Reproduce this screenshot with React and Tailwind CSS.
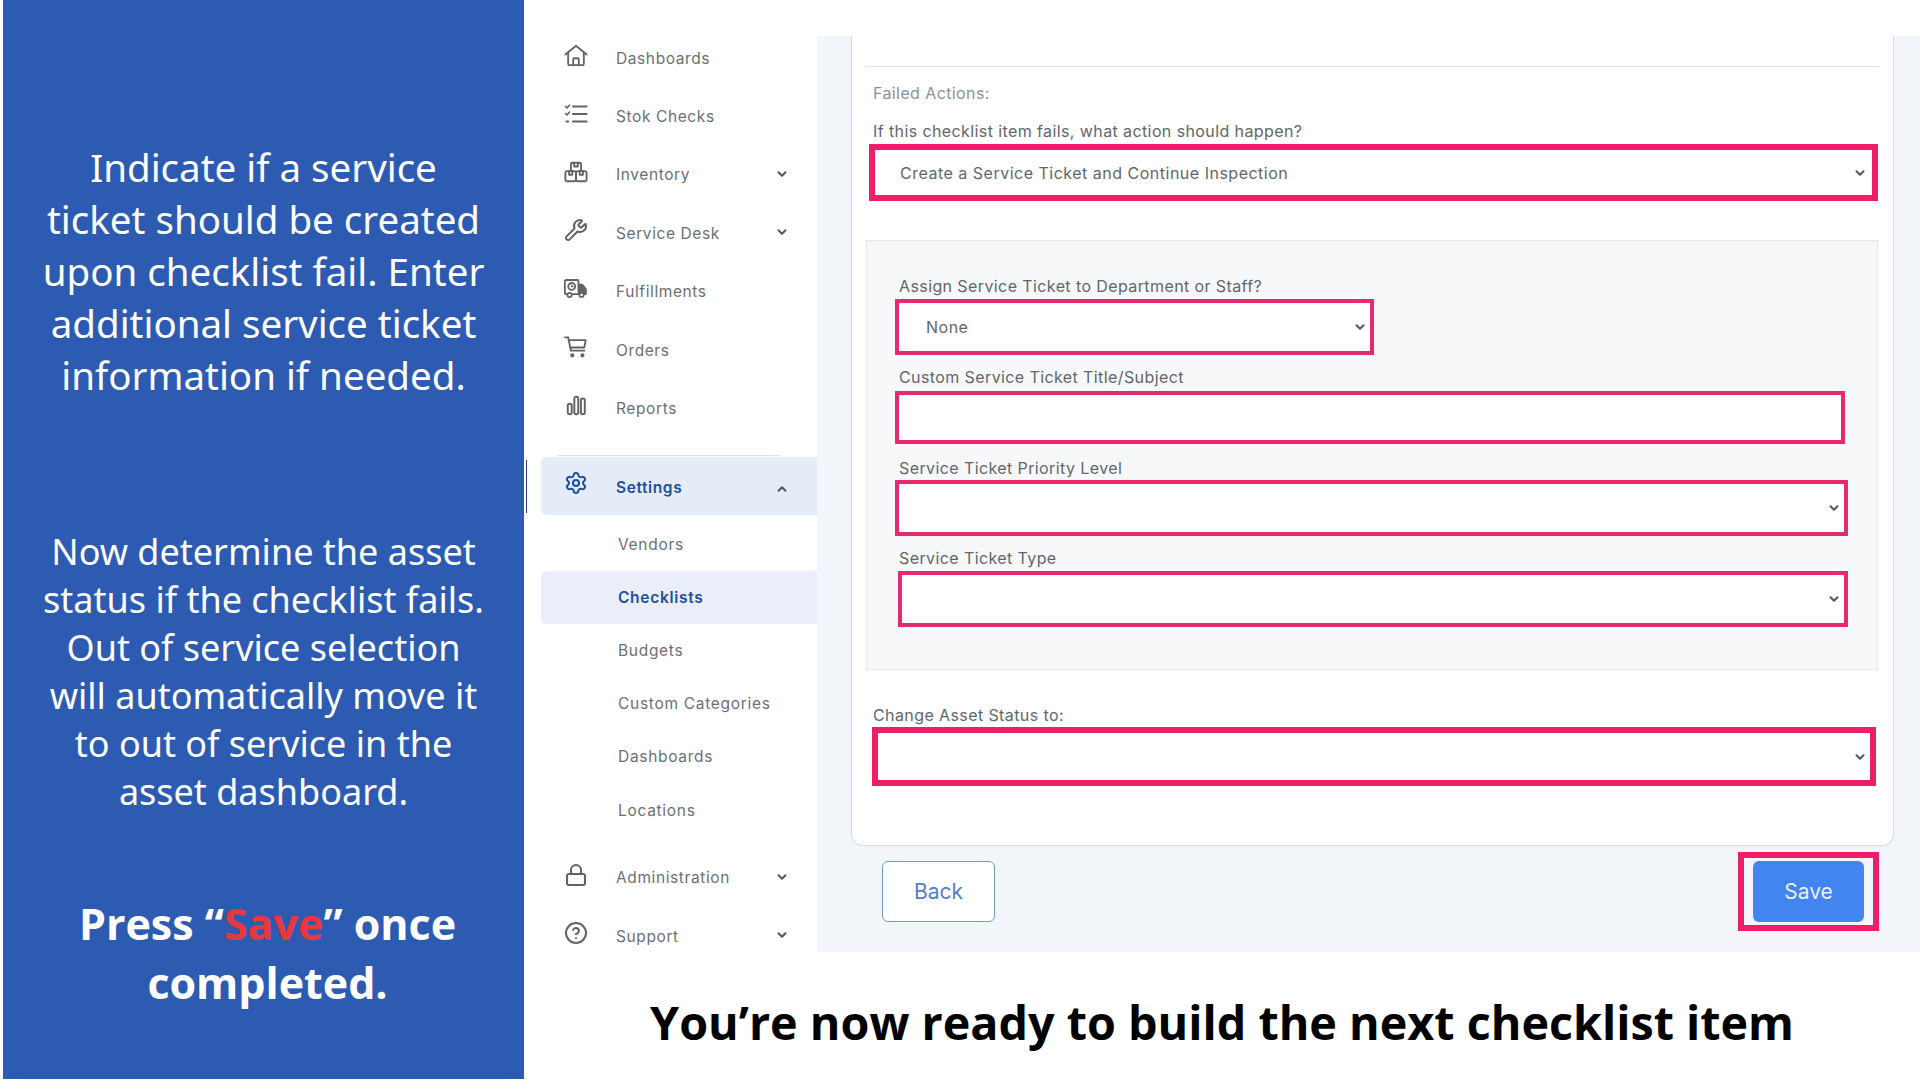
import { ChevronDown, ChevronUp, CircleHelp, Lock, Settings, Wrench } from 'lucide-react';

function HomeIcon() {
  return (
    <svg width="26" height="25" viewBox="0 0 26 25" fill="none" stroke="currentColor" strokeWidth="2" strokeLinecap="round" strokeLinejoin="round">
      <path d="M1.500 11.500L13 2l11.500 9.500" />
      <path d="M4.500 10v11.500a1.500 1.500 0 0 0 1.500 1.500h14a1.500 1.500 0 0 0 1.500-1.500V10" />
      <path d="M10 23v-6.500a1 1 0 0 1 1-1h4a1 1 0 0 1 1 1V23" />
    </svg>
  );
}

function ChecksIcon() {
  return (
    <svg width="24" height="24" viewBox="0 0 24 24" fill="none" stroke="currentColor" strokeLinecap="round" strokeLinejoin="round">
      <path d="M1.500 4.500l1.500 1.500L5.500 3M1.500 11.500l1.500 1.500L5.500 10" strokeWidth="1.600" />
      <path d="M9 4.500h13.500M9 12h13.500M9 19.500h13.500" strokeWidth="2.200" />
      <path d="M2.500 19.500h1.500" strokeWidth="2.200" />
    </svg>
  );
}

function BoxesIcon() {
  return (
    <svg width="26" height="24" viewBox="0 0 26 24" fill="none" stroke="currentColor" strokeWidth="2" strokeLinejoin="round" strokeLinecap="round">
      <path d="M7.500 11V3.500A1.500 1.500 0 0 1 9 2h8a1.500 1.500 0 0 1 1.500 1.500V11" />
      <path d="M11 2v4h4V2" />
      <rect x="1.500" y="11" width="11.500" height="11" rx="2" />
      <rect x="13" y="11" width="11.500" height="11" rx="2" />
      <path d="M5.500 11v4h3.500v-4M17 11v4h3.500v-4" />
    </svg>
  );
}

function TruckIcon() {
  return (
    <svg width="28" height="24" viewBox="0 0 28 24" fill="none" stroke="currentColor" strokeWidth="2.100" strokeLinejoin="round">
      <path d="M4 18H2.500A1.500 1.500 0 0 1 1 16.500V3a1.500 1.500 0 0 1 1.500-1.500h13A1.500 1.500 0 0 1 17 3v15H9" />
      <circle cx="9" cy="9" r="4" />
      <path d="M9 7v2.200h2" strokeWidth="1.500" />
      <path d="M17 7h4.500l4 5v6h-8z" fill="currentColor" />
      <circle cx="6.500" cy="19" r="2.500" fill="#ffffff" />
      <circle cx="20.500" cy="19" r="2.500" fill="#ffffff" />
    </svg>
  );
}

function CartIcon() {
  return (
    <svg width="26" height="24" viewBox="0 0 26 24" fill="none" stroke="currentColor" strokeWidth="2" strokeLinecap="round" strokeLinejoin="round">
      <path d="M1 1.500h3.500l3 14.500h14.500" />
      <path d="M5.200 4.500h18.300l-1.500 8H7" />
      <circle cx="9" cy="21" r="1.300" fill="currentColor" />
      <circle cx="20" cy="21" r="1.300" fill="currentColor" />
    </svg>
  );
}

function BarsIcon() {
  return (
    <svg width="21" height="21" viewBox="0 0 24 24" fill="none" stroke="currentColor" strokeWidth="2.200">
      <rect x="2" y="10" width="4.500" height="12" rx="2" />
      <rect x="9.500" y="2" width="4.500" height="20" rx="2" />
      <rect x="17" y="4" width="4.500" height="18" rx="2" />
    </svg>
  );
}

function NavRow({ icon, label, caret }) {
  return (
    <div className="flex h-[58.4px] items-center pl-[40px] pr-[28px] text-[#6b7075]">
      <span className="-mt-[6px] flex w-[24px] shrink-0 justify-center text-[#5f6469]">{icon}</span>
      <span className="ml-[28px] text-[15.500px] tracking-[0.6px]">{label}</span>
      {caret && <ChevronDown size={14} strokeWidth={3.500} className="ml-auto -mt-[2px] text-[#55595e]" />}
    </div>
  );
}

function SubRow({ label, active }) {
  return (
    <div
      className={`ml-[17px] flex h-[53.200px] items-center rounded-l-md pl-[77px] text-[15.500px] tracking-[0.7px] ${
        active ? 'bg-[#e9eef8] font-semibold text-[#1d4f9f]' : 'text-[#6b7075]'
      }`}
    >
      {label}
    </div>
  );
}

function Sidebar() {
  return (
    <nav className="relative w-[293px] shrink-0 bg-white pt-[29px]">
      <NavRow icon={<HomeIcon />} label="Dashboards" />
      <NavRow icon={<ChecksIcon />} label="Stok Checks" />
      <NavRow icon={<BoxesIcon />} label="Inventory" caret />
      <NavRow icon={<Wrench size={24} strokeWidth={2} />} label="Service Desk" caret />
      <NavRow icon={<TruckIcon />} label="Fulfillments" />
      <NavRow icon={<CartIcon />} label="Orders" />
      <NavRow icon={<BarsIcon />} label="Reports" />
      <div className="ml-[33px] mt-[17px] mr-[37px] h-px bg-[#dde1e8]" />
      <div className="ml-[17px] mt-px flex h-[58px] items-center rounded-l-md bg-[#e6ecf7] pl-[23px] pr-[28px] text-[#1d4f9f]">
        <span className="-mt-[6px] flex w-[24px] shrink-0 justify-center">
          <Settings size={24} strokeWidth={2} />
        </span>
        <span className="ml-[28px] mt-[4px] text-[15.500px] font-semibold tracking-[0.6px]">Settings</span>
        <ChevronUp size={14} strokeWidth={3.500} className="ml-auto mt-[6px] text-[#55595e]" />
      </div>
      <div className="mt-[3px]">
        <SubRow label="Vendors" />
        <SubRow label="Checklists" active />
        <SubRow label="Budgets" />
        <SubRow label="Custom Categories" />
        <SubRow label="Dashboards" />
        <SubRow label="Locations" />
      </div>
      <div className="mt-[12px]">
        <NavRow icon={<Lock size={24} strokeWidth={2} />} label="Administration" caret />
        <NavRow icon={<CircleHelp size={24} strokeWidth={2} />} label="Support" caret />
      </div>
      <div className="absolute left-[2px] top-[460px] h-[53px] w-px bg-[#1d3f80]" />
    </nav>
  );
}

function FieldLabel({ children, className, muted }) {
  return (
    <p className={`h-[20px] text-[16px] leading-[20px] tracking-[0.4px] ${muted ? 'text-[#8a929c]' : 'text-[#62666c]'} ${className}`}>
      {children}
    </p>
  );
}

function PinkSelect({ value, className, selectClass, caretClass }) {
  return (
    <div className={`relative ${className}`}>
      <select
        className={`block h-full w-full appearance-none bg-white text-[16px] tracking-[0.5px] text-[#62666c] ${selectClass}`}
        defaultValue={value || ''}
      >
        <option value={value || ''}>{value || ''}</option>
      </select>
      <ChevronDown size={14} strokeWidth={3.500} className={`pointer-events-none absolute top-1/2 -translate-y-1/2 text-[#55595e] ${caretClass}`} />
    </div>
  );
}

function ChecklistForm() {
  return (
    <div className="flex h-[810px] flex-col rounded-b-xl border border-t-0 border-[#d5dbe3] bg-white px-[14px] pt-[30px]">
      <div className="h-px bg-[#dfe2e6]" />
      <FieldLabel muted className="ml-[7px] mt-[16px]">Failed Actions:</FieldLabel>
      <FieldLabel className="ml-[7px] mt-[18px]">If this checklist item fails, what action should happen?</FieldLabel>
      <PinkSelect
        value="Create a Service Ticket and Continue Inspection"
        className="ml-[3px] mt-[3px] h-[57px] w-[1009px]"
        selectClass="border-[6px] border-[#ee1f68] pl-[25px]"
        caretClass="right-[11px]"
      />
      <div className="mt-[39px] h-[430px] w-[1012px] border border-[#e6e8ec] bg-[#f7f8fa] pl-[28px] pt-[35px]">
        <FieldLabel className="ml-[4px]">Assign Service Ticket to Department or Staff?</FieldLabel>
        <PinkSelect
          value="None"
          className="mt-[3px] h-[56px] w-[479px]"
          selectClass="border-[4px] border-[#e62a6e] pl-[27px]"
          caretClass="right-[7px]"
        />
        <FieldLabel className="ml-[4px] mt-[12px]">Custom Service Ticket Title/Subject</FieldLabel>
        <input type="text" className="mt-[4px] block h-[53px] w-[950px] border-[4px] border-[#e62a6e] bg-white" />
        <FieldLabel className="ml-[4px] mt-[14px]">Service Ticket Priority Level</FieldLabel>
        <PinkSelect className="mt-[2px] h-[56px] w-[953px]" selectClass="border-[4px] border-[#e62a6e]" caretClass="right-[7px]" />
        <FieldLabel className="ml-[4px] mt-[12px]">Service Ticket Type</FieldLabel>
        <PinkSelect className="ml-[3px] mt-[3px] h-[56px] w-[950px]" selectClass="border-[4px] border-[#e62a6e]" caretClass="right-[7px]" />
      </div>
      <FieldLabel className="ml-[7px] mt-[35px]">Change Asset Status to:</FieldLabel>
      <PinkSelect className="ml-[6px] mt-[2px] h-[59px] w-[1004px]" selectClass="border-[6px] border-[#ee1f68]" caretClass="right-[9px]" />
    </div>
  );
}

export default function App() {
  return (
    <div className="flex h-[1080px] w-[1920px] overflow-hidden bg-white font-['Inter',sans-serif]">
      <aside className="ml-[3px] h-[1079px] w-[521px] shrink-0 bg-[#2d5bb2] pt-[141px] text-center font-['Noto_Sans',sans-serif] text-white">
        <p className="text-[38.500px] leading-[52px]">
          Indicate if a service<br />
          ticket should be created<br />
          upon checklist fail. Enter<br />
          additional service ticket<br />
          information if needed.
        </p>
        <p className="mt-[127px] text-[36px] leading-[48px]">
          Now determine the asset<br />
          status if the checklist fails.<br />
          Out of service selection<br />
          will automatically move it<br />
          to out of service in the<br />
          asset dashboard.
        </p>
        <p className="mt-[79px] pl-[8px] font-['Open_Sans',sans-serif] text-[43px] font-bold leading-[58.800px]">
          Press “<span className="text-[#e8373f]">Save</span>” once<br />
          completed.
        </p>
      </aside>
      <div className="flex min-w-0 flex-1 flex-col">
        <div className="flex h-[952px] shrink-0">
          <Sidebar />
          <main className="mt-[36px] flex-1 bg-[#f2f5f9] pl-[34px] pr-[26px]">
            <ChecklistForm />
            <div className="flex items-start justify-between pl-[31px] pr-[15px]">
              <button type="button" className="mt-[15px] h-[61px] w-[113px] rounded-md border border-[#6f9bd0] bg-white text-[21px] text-[#4f7fd0]">
                Back
              </button>
              <div className="mt-[6px] border-[6px] border-[#ee1f68] px-[9px] py-[3px]">
                <button type="button" className="block h-[61px] w-[111px] rounded-md bg-[#4285f0] text-[21px] text-[#e8f1ff]">
                  Save
                </button>
              </div>
            </div>
          </main>
        </div>
        <h1 className="pt-[40px] text-center font-['Open_Sans',sans-serif] text-[46.700px] font-bold leading-[60px] text-black">
          You’re now ready to build the next checklist item
        </h1>
      </div>
    </div>
  );
}
